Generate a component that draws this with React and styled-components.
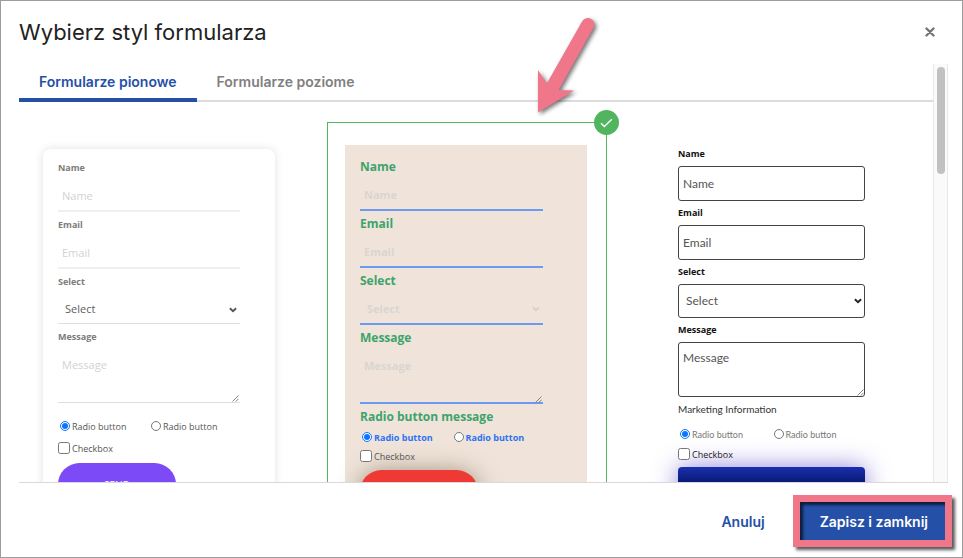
import { useId, useState } from "react";
import styled, { createGlobalStyle, ThemeProvider } from "styled-components";

/* ─── Preview looks ──────────────────────────────────────── */

const soft = {
  font: '"Open Sans", sans-serif',
  background: "#fff",
  radius: 8,
  shadow: "0 0 10px rgba(0, 0, 0, 0.12)",
  margin: "4px 4px 0 6px",
  padding: "12px 35px 40px 15px",
  label: { color: "#7c7c7c", size: 9, line: 14, gap: 0 },
  field: {
    color: "#d2d2d2",
    weight: 400,
    size: 11,
    height: 37,
    border: "0",
    line: "2px solid #efefef",
    radius: 0,
    padding: "5px 4px 0",
  },
  select: {
    height: 35,
    color: "#606060",
    arrow: "#555",
    arrowTop: 18,
    line: "1px solid #dedede",
    padding: "5px 7px 0",
  },
  area: { height: 59, line: "1px solid #dedede", padding: "14px 4px 0" },
  gap: 6,
  choices: { top: 16, gap: 8, color: "#555", muted: "#555", weight: 400 },
  button: {
    top: 8,
    width: "118px",
    height: 43,
    radius: 22,
    background: "#7c4af7",
    shadow: "none",
  },
};

const warm = {
  font: '"Open Sans", sans-serif',
  background: "#f0e4da",
  radius: 0,
  shadow: "none",
  margin: "0",
  padding: "14px 44px 40px 15px",
  label: { color: "#3da36c", size: 12, line: 16, gap: 0 },
  field: {
    color: "#d9d5d2",
    weight: 700,
    size: 11,
    height: 36,
    border: "0",
    line: "2px solid #6b9af0",
    radius: 0,
    padding: "4px 4px 0",
  },
  select: {
    height: 36,
    color: "#d9d5d2",
    arrow: "#d5d1ce",
    arrowTop: 17,
    line: "2px solid #6b9af0",
    padding: "4px 7px 0",
  },
  area: { height: 58, line: "2px solid #6b9af0", padding: "13px 4px 0" },
  gap: 5,
  choices: { top: 5, gap: 5, color: "#555", muted: "#2b72f5", weight: 700 },
  button: {
    top: 7,
    width: "118px",
    height: 43,
    radius: 22,
    background: "#ef3934",
    shadow: "0 2px 24px rgba(70, 50, 20, 0.5)",
  },
};

const outlined = {
  font: 'Lato, "Open Sans", sans-serif',
  background: "#fff",
  radius: 0,
  shadow: "none",
  margin: "0",
  padding: "2px 30px 40px 25px",
  label: { color: "#111", size: 9, line: 14, gap: 5 },
  field: {
    color: "#555",
    weight: 400,
    size: 12,
    height: 35,
    border: "1px solid #444",
    line: "1px solid #444",
    radius: 3,
    padding: "0 4px",
  },
  select: {
    height: 34,
    color: "#555",
    arrow: "#222",
    arrowTop: 14,
    line: "1px solid #444",
    padding: "0 7px 2px",
  },
  area: { height: 55, line: "1px solid #444", padding: "8px 4px 0" },
  gap: 5,
  choices: { top: 11, gap: 6, color: "#222", muted: "#777", weight: 400 },
  button: {
    top: 6,
    width: "100%",
    height: 43,
    radius: 4,
    background: "linear-gradient(#1a2fae, #0a1a78 15px, #071463)",
    shadow: "0 0 24px rgba(70, 50, 200, 0.6)",
  },
};

const STYLES = [
  { id: "soft", look: soft },
  { id: "warm", look: warm, message: "Radio button message" },
  { id: "outlined", look: outlined, message: "Marketing Information", plainMessage: true },
];

const TABS = ["Formularze pionowe", "Formularze poziome"];

/* ─── Icons ──────────────────────────────────────────────── */

function CloseIcon() {
  return (
    <svg width="10" height="10" viewBox="0 0 10 10" fill="none">
      <path d="M1.5 1.5l7 7M8.5 1.5l-7 7" stroke="#757575" strokeWidth="2.4" strokeLinecap="round" />
    </svg>
  );
}

function CheckIcon() {
  return (
    <svg width="13" height="10" viewBox="0 0 13 10" fill="none">
      <path d="M1 5.2l3.4 3.4L11.8 1.2" stroke="#fff" strokeWidth="1.4" />
    </svg>
  );
}

function ChevronIcon({ color }) {
  return (
    <svg width="8" height="6" viewBox="0 0 8 6" fill="none">
      <path d="M0.900 1.200l3.100 3 3.100-3" stroke={color} strokeWidth="1.9" />
    </svg>
  );
}

function GripIcon() {
  return (
    <svg width="7" height="7" viewBox="0 0 7 7" fill="none">
      <path d="M0.5 6.5l6-6M3.8 6.5l2.7-2.7" stroke="#777" strokeWidth="0.9" />
    </svg>
  );
}

function PointerArrow() {
  return (
    <Pointer width="72" height="108" viewBox="530 12 72 108" aria-hidden="true">
      <path
        d="M538 112.500L538 70L546.800 83.500L582.300 21A6.600 6.600 0 0 1 593.700 27.600L558.700 90L574 90.500Z"
        fill="#f0768a"
      />
    </Pointer>
  );
}

/* ─── Form preview ───────────────────────────────────────── */

function FormPreview({ look, message, plainMessage }) {
  const id = useId();

  return (
    <ThemeProvider theme={look}>
      <Form onSubmit={(e) => e.preventDefault()}>
        <Fields>
          <Field>
            <FieldLabel htmlFor={`${id}name`}>Name</FieldLabel>
            <TextInput id={`${id}name`} placeholder="Name" />
          </Field>
          <Field>
            <FieldLabel htmlFor={`${id}email`}>Email</FieldLabel>
            <TextInput id={`${id}email`} type="email" placeholder="Email" />
          </Field>
          <Field>
            <FieldLabel htmlFor={`${id}select`}>Select</FieldLabel>
            <ControlWrap>
              <Select id={`${id}select`}>
                <option>Select</option>
              </Select>
              <Chevron>
                <ChevronIcon color={look.select.arrow} />
              </Chevron>
            </ControlWrap>
          </Field>
          <Field>
            <FieldLabel htmlFor={`${id}message`}>Message</FieldLabel>
            <ControlWrap>
              <TextArea id={`${id}message`} placeholder="Message" />
              <Grip>
                <GripIcon />
              </Grip>
            </ControlWrap>
          </Field>
          {message && <GroupTitle $plain={plainMessage}>{message}</GroupTitle>}
        </Fields>

        <Choices>
          <RadioRow>
            <RadioLabel>
              <Radio name={`${id}radio`} defaultChecked />
              Radio button
            </RadioLabel>
            <RadioLabel>
              <Radio name={`${id}radio`} />
              Radio button
            </RadioLabel>
          </RadioRow>
          <CheckLabel>
            <Checkbox />
            Checkbox
          </CheckLabel>
        </Choices>
        <SendButton>SEND</SendButton>
      </Form>
    </ThemeProvider>
  );
}

/* ─── App ────────────────────────────────────────────────── */

export default function App() {
  const [tab, setTab] = useState(0);
  const [selected, setSelected] = useState("warm");

  return (
    <>
      <GlobalStyle />
      <Dialog role="dialog" aria-labelledby="dialog-title">
        <Header>
          <Title id="dialog-title">Wybierz styl formularza</Title>
          <CloseButton aria-label="Zamknij">
            <CloseIcon />
          </CloseButton>
        </Header>

        <Body>
          <Scroller>
            <Tabs role="tablist">
              {TABS.map((name, i) => (
                <Tab key={name} role="tab" aria-selected={tab === i} $active={tab === i} onClick={() => setTab(i)}>
                  {name}
                </Tab>
              ))}
            </Tabs>
            <Gallery>
              {STYLES.map(({ id, ...preview }) => (
                <Item key={id} $selected={selected === id} onClick={() => setSelected(id)}>
                  {selected === id && (
                    <Badge>
                      <CheckIcon />
                    </Badge>
                  )}
                  <FormPreview {...preview} />
                </Item>
              ))}
            </Gallery>
          </Scroller>
          <Track>
            <Thumb />
          </Track>
        </Body>

        <Footer>
          <CancelButton>Anuluj</CancelButton>
          <Highlight>
            <SaveButton>Zapisz i zamknij</SaveButton>
          </Highlight>
        </Footer>
        <PointerArrow />
      </Dialog>
    </>
  );
}

/* ─── Styles: dialog ─────────────────────────────────────── */

const GlobalStyle = createGlobalStyle`
  *, *::before, *::after { box-sizing: border-box; }

  body {
    margin: 0;
    background: #fff;
    font-family: Inter, sans-serif;
  }

  button, input, select, textarea {
    margin: 0;
    font: inherit;
  }

  svg { display: block; }
`;

const Dialog = styled.div`
  position: relative;
  display: flex;
  flex-direction: column;
  height: 100vh;
  border: 1px solid #9c9c9c;
  background: #fff;
`;

const Header = styled.header`
  display: flex;
  align-items: center;
  justify-content: space-between;
  height: 63px;
  padding: 0 22px 2px 18px;
`;

const Title = styled.h1`
  margin: 0;
  font-size: 22px;
  font-weight: 400;
  line-height: 28px;
  color: #222;
`;

const CloseButton = styled.button`
  padding: 5px;
  border: 0;
  background: none;
  cursor: pointer;
`;

const Body = styled.div`
  display: flex;
  flex: 1;
  min-height: 0;
  margin: 0 14px 0 18px;
  border-bottom: 1px solid #d9d9d9;
`;

const Scroller = styled.div`
  flex: 1;
  min-width: 0;
  overflow: hidden;
`;

const Tabs = styled.div`
  display: flex;
  height: 38px;
  box-shadow: inset 0 -2px #dcdcdc;
`;

const Tab = styled.button`
  padding: 0 20px;
  border: 0;
  border-bottom: 4px solid ${props => (props.$active ? "#2450a8" : "transparent")};
  background: none;
  color: ${props => (props.$active ? "#2450a8" : "#808080")};
  font-size: 14px;
  font-weight: 600;
  cursor: pointer;
`;

const Gallery = styled.div`
  display: grid;
  grid-template-columns: repeat(3, 1fr);
  gap: 28px;
  padding: 20px 18px 20px 0;
`;

const Item = styled.article`
  position: relative;
  padding: 22px 19px 22px 17px;
  border: 1px solid ${props => (props.$selected ? "#51b560" : "transparent")};
`;

const Badge = styled.span`
  position: absolute;
  top: -13px;
  right: -13px;
  display: flex;
  align-items: center;
  justify-content: center;
  width: 25px;
  height: 25px;
  border-radius: 50%;
  background: #51b560;
`;

const Track = styled.div`
  width: 15px;
  padding: 3px;
  border: solid #e8e8e8;
  border-width: 0 1px;
  background: #fafafa;
`;

const Thumb = styled.div`
  width: 8px;
  height: 26%;
  border-radius: 4px;
  background: #c1c1c1;
`;

const Footer = styled.footer`
  display: flex;
  align-items: center;
  justify-content: flex-end;
  gap: 28px;
  padding: 12px 10px 10px;
`;

const CancelButton = styled.button`
  padding: 0;
  border: 0;
  background: none;
  color: #2450a8;
  font-size: 14px;
  font-weight: 600;
  cursor: pointer;
`;

const Highlight = styled.div`
  border: 7px solid #f0768a;
  box-shadow: 3px 3px 3px rgba(0, 0, 0, 0.65);
`;

const SaveButton = styled.button`
  display: block;
  height: 38px;
  padding: 0 17px 0 20px;
  border: 0;
  background: #2450a8;
  box-shadow: inset 3px 3px 3px rgba(0, 0, 0, 0.65);
  color: #fff;
  font-size: 14px;
  font-weight: 600;
  cursor: pointer;
`;

const Pointer = styled.svg`
  position: absolute;
  top: 11px;
  left: 55%;
  filter: drop-shadow(2px 2px 2px rgba(0, 0, 0, 0.55));
  pointer-events: none;
`;

/* ─── Styles: form preview ───────────────────────────────── */

const Form = styled.form`
  margin: ${props => props.theme.margin};
  padding: ${props => props.theme.padding};
  border-radius: ${props => props.theme.radius}px;
  background: ${props => props.theme.background};
  box-shadow: ${props => props.theme.shadow};
  font-family: ${props => props.theme.font};
`;

const Fields = styled.div`
  display: flex;
  flex-direction: column;
  gap: ${props => props.theme.gap}px;
`;

const Field = styled.div`
  display: flex;
  flex-direction: column;
  gap: ${props => props.theme.label.gap}px;
`;

const FieldLabel = styled.label`
  color: ${props => props.theme.label.color};
  font-family: "Open Sans", sans-serif;
  font-size: ${props => props.theme.label.size}px;
  font-weight: 700;
  line-height: ${props => props.theme.label.line}px;
`;

const TextInput = styled.input`
  width: 100%;
  height: ${props => props.theme.field.height}px;
  padding: ${props => props.theme.field.padding};
  border: ${props => props.theme.field.border};
  border-bottom: ${props => props.theme.field.line};
  border-radius: ${props => props.theme.field.radius}px;
  outline: 0;
  background: transparent;
  color: ${props => props.theme.field.color};
  font-size: ${props => props.theme.field.size}px;
  font-weight: ${props => props.theme.field.weight};

  &::placeholder {
    color: ${props => props.theme.field.color};
  }
`;

const Select = styled(TextInput).attrs({ as: "select" })`
  display: block;
  appearance: none;
  height: ${props => props.theme.select.height}px;
  padding: ${props => props.theme.select.padding};
  border-bottom: ${props => props.theme.select.line};
  color: ${props => props.theme.select.color};
`;

const TextArea = styled(TextInput).attrs({ as: "textarea" })`
  display: block;
  height: ${props => props.theme.area.height}px;
  padding: ${props => props.theme.area.padding};
  border-bottom: ${props => props.theme.area.line};
  line-height: 14px;
  resize: none;
`;

const ControlWrap = styled.div`
  position: relative;
`;

const Chevron = styled.span`
  position: absolute;
  top: ${props => props.theme.select.arrowTop}px;
  right: 3px;
  pointer-events: none;
`;

const Grip = styled.span`
  position: absolute;
  right: 1px;
  bottom: 1px;
  pointer-events: none;
`;

const GroupTitle = styled.div`
  color: ${props => (props.$plain ? "#333" : props.theme.label.color)};
  font-size: ${props => (props.$plain ? 10 : props.theme.label.size)}px;
  font-weight: ${props => (props.$plain ? 400 : 700)};
  line-height: ${props => props.theme.label.line}px;
`;

const Choices = styled.div`
  display: flex;
  flex-direction: column;
  gap: ${props => props.theme.choices.gap}px;
  margin-top: ${props => props.theme.choices.top}px;
`;

const RadioRow = styled.div`
  display: grid;
  grid-template-columns: 1fr 1fr;
`;

const CheckLabel = styled.label`
  display: flex;
  align-items: center;
  gap: 2px;
  height: 14px;
  color: ${props => props.theme.choices.color};
  font-family: "Open Sans", sans-serif;
  font-size: 9px;
  white-space: nowrap;
`;

const RadioLabel = styled(CheckLabel)`
  padding-left: 2px;
  color: ${props => props.theme.choices.muted};
  font-family: inherit;
  font-weight: ${props => props.theme.choices.weight};
`;

const Radio = styled.input.attrs({ type: "radio" })`
  width: 10px;
  height: 10px;
  accent-color: #0a75ff;
`;

const Checkbox = styled.input.attrs({ type: "checkbox" })`
  width: 12px;
  height: 12px;
`;

const SendButton = styled.button`
  display: block;
  width: ${props => props.theme.button.width};
  height: ${props => props.theme.button.height}px;
  margin-top: ${props => props.theme.button.top}px;
  border: 0;
  border-radius: ${props => props.theme.button.radius}px;
  background: ${props => props.theme.button.background};
  box-shadow: ${props => props.theme.button.shadow};
  color: #fff;
  font-size: 10px;
  font-weight: 400;
`;
